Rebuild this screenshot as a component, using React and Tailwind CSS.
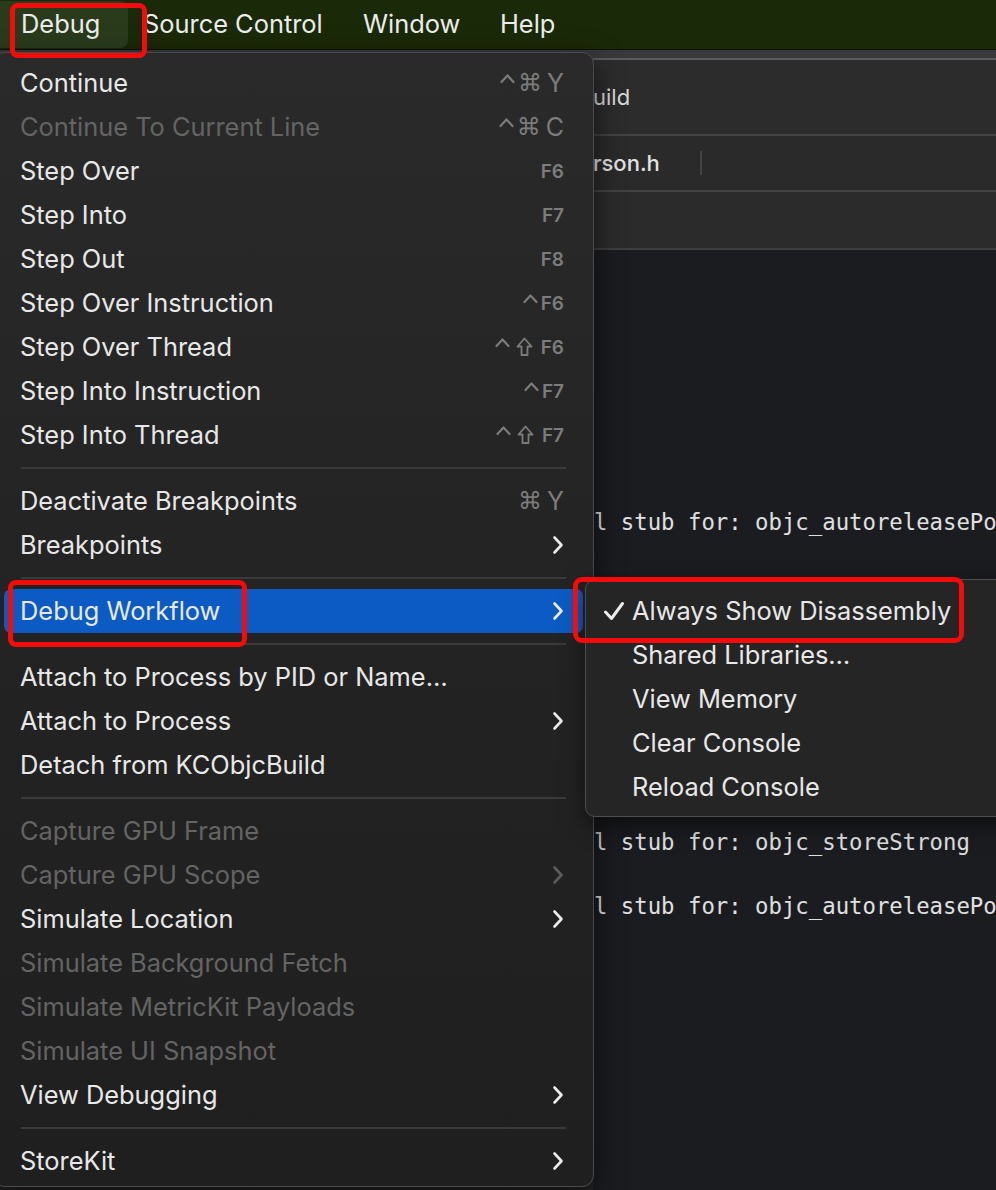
import React from "react";

const Chevron = ({ dim }) => (
  <svg width="12" height="20" viewBox="0 0 12 20" className={dim ? "text-[#5c5c5c]" : "text-[#ececec]"}>
    <path d="M2.5 2.5 L9.5 10 L2.5 17.5" fill="none" stroke="currentColor" strokeWidth="2.6" strokeLinecap="round" strokeLinejoin="round" />
  </svg>
);

const Check = () => (
  <svg width="22" height="20" viewBox="0 0 22 20" className="text-[#ececec]">
    <path d="M2.5 11 L8.5 17.5 L19.5 2.5" fill="none" stroke="currentColor" strokeWidth="3" strokeLinecap="round" strokeLinejoin="round" />
  </svg>
);

const Caret = () => (
  <svg width="15" height="20" viewBox="0 0 15 20" className="mr-[3px]">
    <path d="M1.5 9 L7.5 2.5 L13.5 9" fill="none" stroke="currentColor" strokeWidth="2.2" strokeLinecap="round" strokeLinejoin="round" />
  </svg>
);

const Shift = () => (
  <svg width="17" height="20" viewBox="0 0 17 20" className="ml-[3px] mr-[8px]">
    <path d="M8.5 1.5 L15.5 9.5 L11.5 9.5 L11.5 18 L5.5 18 L5.5 9.5 L1.5 9.5 Z" fill="none" stroke="currentColor" strokeWidth="1.8" strokeLinejoin="round" />
  </svg>
);

const Shortcut = ({ ctrl, cmd, shift, keyName, fkey }) => (
  <span className="flex items-center text-[#7c7c7c]">
    {ctrl && <Caret />}
    {shift && <Shift />}
    {cmd && <span className="font-['DejaVu_Sans'] text-[24px] leading-none">⌘</span>}
    {keyName && <span className="ml-[5px] text-[25px] leading-none">{keyName}</span>}
    {fkey && <span className="text-[19px] font-semibold leading-none">{fkey}</span>}
  </span>
);

const items = [
  { label: "Continue", ctrl: true, cmd: true, keyName: "Y" },
  { label: "Continue To Current Line", ctrl: true, cmd: true, keyName: "C", disabled: true },
  { label: "Step Over", fkey: "F6" },
  { label: "Step Into", fkey: "F7" },
  { label: "Step Out", fkey: "F8" },
  { label: "Step Over Instruction", ctrl: true, fkey: "F6" },
  { label: "Step Over Thread", ctrl: true, shift: true, fkey: "F6" },
  { label: "Step Into Instruction", ctrl: true, fkey: "F7" },
  { label: "Step Into Thread", ctrl: true, shift: true, fkey: "F7" },
  { sep: true },
  { label: "Deactivate Breakpoints", cmd: true, keyName: "Y" },
  { label: "Breakpoints", sub: true },
  { sep: true },
  { label: "Debug Workflow", sub: true, active: true },
  { sep: true },
  { label: "Attach to Process by PID or Name…" },
  { label: "Attach to Process", sub: true },
  { label: "Detach from KCObjcBuild" },
  { sep: true },
  { label: "Capture GPU Frame", disabled: true },
  { label: "Capture GPU Scope", disabled: true, sub: true },
  { label: "Simulate Location", sub: true },
  { label: "Simulate Background Fetch", disabled: true },
  { label: "Simulate MetricKit Payloads", disabled: true },
  { label: "Simulate UI Snapshot", disabled: true },
  { label: "View Debugging", sub: true },
  { sep: true },
  { label: "StoreKit", sub: true },
];

const subItems = [
  { label: "Always Show Disassembly", checked: true },
  { label: "Shared Libraries…" },
  { label: "View Memory" },
  { label: "Clear Console" },
  { label: "Reload Console" },
];

const codeLines = Array.from({ length: 30 }, () => "");
codeLines[8] = "l stub for: objc_autoreleasePo";
codeLines[18] = "l stub for: objc_storeStrong";
codeLines[20] = "l stub for: objc_autoreleasePo";

export default function App() {
  return (
    <div className="relative w-[996px] h-[1190px] overflow-hidden bg-[#1b1c20] font-['Inter',sans-serif] text-[25.4px]">
      {/* menu bar */}
      <div className="flex h-[49px] items-center bg-[#1a2907] text-[#ececec]">
        <div className="w-[143px] h-full flex items-center">
          <div className="h-[47px] w-[128px] rounded-r-[8px] bg-[#2a3b1c] flex items-center pl-[21px]">Debug</div>
        </div>
        <div className="w-[220px]">Source Control</div>
        <div className="w-[137px]">Window</div>
        <div>Help</div>
      </div>

      {/* Xcode window behind */}
      <div className="flex flex-col">
        <div className="h-[1px] bg-[#101010]" />
        <div className="h-[10px] bg-[#38393b] border-b-[2px] border-[#5c5c5c]" />
        <div className="flex">
          <div className="w-[593px] shrink-0 bg-[#262626]" />
          <div className="flex-1 flex flex-col">
            <div className="h-[76px] bg-[#2c2c2c] flex items-center text-[22px] text-[#dadada] border-b-[2px] border-[#434343]">
              uild
            </div>
            <div className="h-[56px] bg-[#2a2a2a] flex items-center text-[22px] font-medium text-[#e2e2e2] border-b-[2px] border-[#434343]">
              <span className="w-[107px]">rson.h</span>
              <span className="h-[24px] w-[2px] bg-[#444]" />
            </div>
            <div className="h-[58px] bg-[#2b2b2b] border-b-[2px] border-[#3e3e3e]" />
            <div className="flex flex-col bg-[#1b1c20] font-['DejaVu_Sans_Mono',monospace] text-[22.3px] text-[#e0e0e0] pl-[1px]">
              {codeLines.map((l, i) => (
                <div key={i} className="h-[32px] leading-[32px] whitespace-nowrap">{l}</div>
              ))}
            </div>
          </div>
        </div>
      </div>

      {/* Debug menu */}
      <div className="absolute left-[-7px] top-[52px] w-[601px] h-[1135px] rounded-[12px] border border-[#4a4a4a] bg-gradient-to-b from-[#2a2a2a] via-[#232323] to-[#1f1f1f] pt-[8px] shadow-[0_10px_30px_rgba(0,0,0,0.6)]">
        {items.map((it, i) =>
          it.sep ? (
            <div key={i} className="h-[22px] flex items-center px-[27px]">
              <div className="h-[2px] w-full bg-[#3a3a3a]" />
            </div>
          ) : (
            <div
              key={i}
              className={`mx-[10px] h-[44px] flex items-center justify-between pl-[16px] pr-[19px] rounded-[7px] ${
                it.active ? "bg-[#0c5bc4]" : ""
              } ${it.disabled ? "text-[#646464]" : "text-[#e8e8e8]"}`}
            >
              <span>{it.label}</span>
              {it.sub ? (
                <Chevron dim={it.disabled} />
              ) : (
                (it.cmd || it.keyName || it.fkey) && (
                  <Shortcut ctrl={it.ctrl} cmd={it.cmd} shift={it.shift} keyName={it.keyName} fkey={it.fkey} />
                )
              )}
            </div>
          )
        )}
      </div>

      {/* Debug Workflow submenu */}
      <div className="absolute left-[585px] top-[579px] w-[440px] h-[238px] rounded-[10px] border border-[#4e4e4e] bg-[#252525] pt-[9px] shadow-[0_8px_24px_rgba(0,0,0,0.5)]">
        {subItems.map((s) => (
          <div key={s.label} className="h-[44px] flex items-center text-[#e8e8e8]">
            <span className="w-[46px] flex justify-end pr-[7px]">{s.checked && <Check />}</span>
            <span>{s.label}</span>
          </div>
        ))}
      </div>

      {/* red annotation boxes */}
      <div className="absolute left-[10px] top-[3px] w-[137px] h-[55px] rounded-[8px] border-[5px] border-[#f40b0b]" />
      <div className="absolute left-[8px] top-[580px] w-[239px] h-[67px] rounded-[8px] border-[5px] border-[#f40b0b]" />
      <div className="absolute left-[573px] top-[577px] w-[391px] h-[66px] rounded-[9px] border-[5px] border-[#f40b0b]" />
    </div>
  );
}
